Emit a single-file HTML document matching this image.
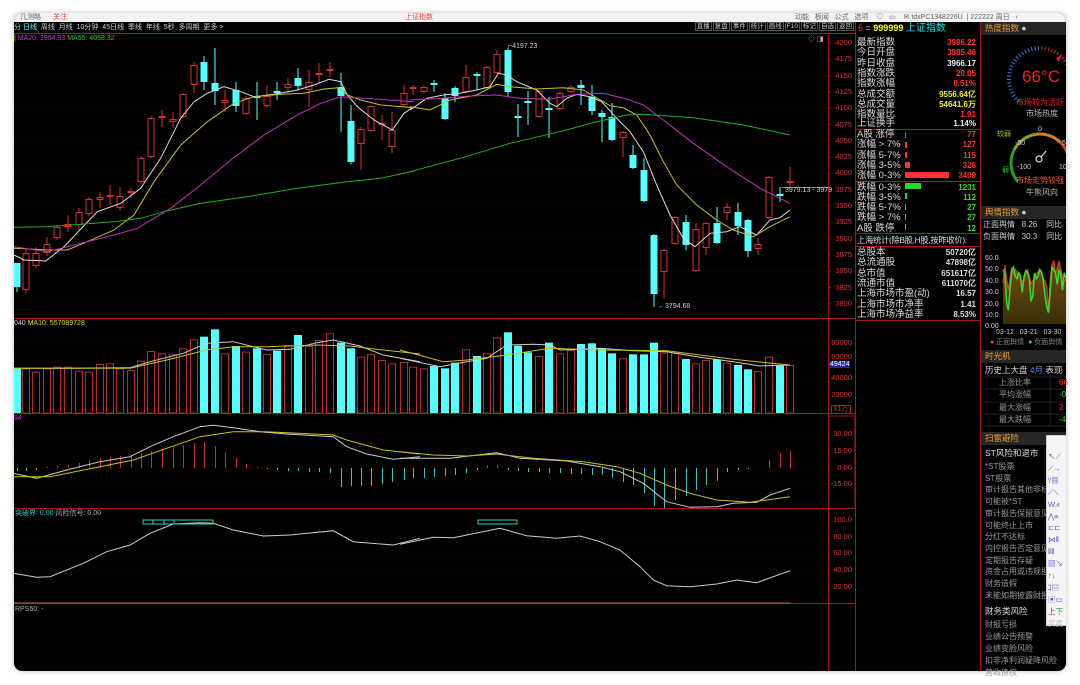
<!DOCTYPE html>
<html><head><meta charset="utf-8">
<style>
*{margin:0;padding:0;box-sizing:border-box}
body{width:1080px;height:685px;background:#fff;position:relative;overflow:hidden;font-family:"Liberation Sans","Noto Sans CJK SC",sans-serif}
.win{position:absolute;left:14px;top:13px;width:1052px;height:658px;background:#000;border-radius:8px;overflow:hidden;box-shadow:0 0 6px rgba(0,0,0,.25)}
.t{position:absolute;white-space:nowrap;line-height:1}
.s8{font-size:8px}
.s7{font-size:7px}
.ax{position:absolute;font-size:7.5px;color:#d33;text-align:right;width:26px;line-height:1}
.row{position:absolute;left:857px;width:121px;height:10.3px;font-size:9.5px;line-height:10.3px;color:#ddd;white-space:nowrap}
.row b{position:absolute;right:2px;font-weight:bold;font-size:8px}
.rp{position:absolute;font-size:8px;color:#ccc;white-space:nowrap;line-height:1}
.hdr{position:absolute;left:981px;width:85px;height:13px;background:#262626;color:#f0a030;font-size:8.5px;line-height:13px;padding-left:4px}
.bt{border:1px solid #555;padding:0 1px;margin-left:1px}
</style></head><body>
<div class="win"></div>
<svg id="sv" width="1080" height="685" style="position:absolute;left:0;top:0">
<defs><clipPath id="cp"><rect x="14" y="13" width="1052" height="658" rx="8"/></clipPath>
<linearGradient id="gf" x1="0" y1="0" x2="0" y2="1"><stop offset="0" stop-color="#7a4a10"/><stop offset="1" stop-color="#3a3008"/></linearGradient></defs>
<g id="g" clip-path="url(#cp)"></g>
</svg>

<div class="t s8" style="left:14px;top:13px;width:1052px;height:9px;background:#f2f2f2;border-radius:8px 8px 0 0"></div>
<div class="t s7" style="left:20px;top:14px;color:#666">几测略 <span style="color:#e44;margin-left:10px">关注</span></div>
<div class="t s7" style="left:405px;top:14px;color:#e44">上证指数</div>
<div class="t s7" style="left:795px;top:14px;color:#666">动能 &nbsp;&nbsp;板闻 &nbsp;&nbsp;公式 &nbsp;&nbsp;选项 &nbsp;&nbsp;&nbsp;♡ &nbsp;&nbsp;▭ &nbsp;&nbsp;&nbsp;✉ tdxPC1348226U &nbsp;| 222222 周日 &nbsp;&nbsp;‹</div>

<div class="t s7" style="left:14px;top:24px;color:#ccc">分 <span style="color:#6ff">日线</span> &nbsp;周线 &nbsp;月线 &nbsp;10分钟 &nbsp;45日线 &nbsp;季线 &nbsp;年线 &nbsp;5秒 &nbsp;多周期 &nbsp;更多 &gt;</div>
<div class="t" style="right:226px;top:24px;color:#ccc;font-size:6.5px"><span class="bt">直播</span><span class="bt">复盘</span><span class="bt">事件</span><span class="bt">统计</span><span class="bt">画线</span><span class="bt">F10</span><span class="bt">标记</span><span class="bt">自选</span><span class="bt">返回</span></div>
<div class="t" style="left:858px;top:24px;font-size:9px;color:#e33">6 <span style="color:#ccc">=</span> <b style="color:#ff0">999999</b> <span style="color:#2dd;font-size:10px">上证指数</span></div>

<div class="t s7" style="left:14px;top:35px;color:#c3c"><span style="color:#dd0">|</span> MA20: 3954.33 <span style="color:#2c2">MA55: 4058.32</span></div>
<div class="t s7" style="left:508px;top:43px;color:#ccc">⌐4197.23</div>
<div class="t s7" style="left:658px;top:303px;color:#ccc">←3794.68</div>
<div class="t s7" style="left:785px;top:187px;color:#ccc">3979.13 - 3979</div>
<div class="t s7" style="left:808px;top:36px;color:#aaa">◇ ◨</div>
<div class="t s7" style="left:14px;top:320px;color:#ccc">040 <span style="color:#dd0">MA10: 557089728</span></div>
<div class="t s7" style="left:14px;top:415px;color:#c3c">94</div>
<div class="t s7" style="left:15px;top:510px;color:#2cc">突破界: 0.00 <span style="color:#aaa">风险信号: 0.00</span></div>
<div class="t s7" style="left:15px;top:606px;color:#aaa">RPS50: -</div>

<div id="pax"></div>
<div class="ax" style="left:826px;top:339px">80000</div>
<div class="ax" style="left:826px;top:353px">60000</div>
<div class="t s7" style="left:829px;top:361px;background:#2222aa;color:#fff;padding:0 1px">49424</div>
<div class="ax" style="left:826px;top:374px">40000</div>
<div class="ax" style="left:826px;top:391px">20000</div>
<div class="t s7" style="left:831px;top:405px;color:#d33;border:1px solid #a22;padding:0 1px">X1万</div>
<div class="ax" style="left:826px;top:430px">30.00</div>
<div class="ax" style="left:826px;top:447px">15.00</div>
<div class="ax" style="left:826px;top:464px">0.00</div>
<div class="ax" style="left:826px;top:480px">-15.00</div>
<div class="ax" style="left:826px;top:516px">100.0</div>
<div class="ax" style="left:826px;top:533px">80.00</div>
<div class="ax" style="left:826px;top:549px">60.00</div>
<div class="ax" style="left:826px;top:566px">40.00</div>
<div class="ax" style="left:826px;top:583px">20.00</div>

<div class="row" style="top:38px">最新指数<b style="color:#f33">3986.22</b></div>
<div class="row" style="top:48.3px">今日开盘<b style="color:#f33">3985.46</b></div>
<div class="row" style="top:58.6px">昨日收盘<b style="color:#eee">3966.17</b></div>
<div class="row" style="top:68.9px">指数涨跌<b style="color:#f33">20.05</b></div>
<div class="row" style="top:79.2px">指数涨幅<b style="color:#f33">0.51%</b></div>
<div class="row" style="top:89.5px">总成交额<b style="color:#ee2">9556.64亿</b></div>
<div class="row" style="top:99.8px">总成交量<b style="color:#ee2">54641.6万</b></div>
<div class="row" style="top:110.1px">指数量比<b style="color:#f33">1.01</b></div>
<div class="row" style="top:119.4px">上证换手<b style="color:#eee">1.14%</b></div>
<div class="row" style="top:130px">A股 涨停<b style="color:#f33">77</b></div>
<div class="row" style="top:140.3px">涨幅 &gt; 7%<b style="color:#f33">127</b></div>
<div class="row" style="top:150.6px">涨幅 5-7%<b style="color:#f33">115</b></div>
<div class="row" style="top:160.9px">涨幅 3-5%<b style="color:#f33">326</b></div>
<div class="row" style="top:171.2px">涨幅 0-3%<b style="color:#f33">3409</b></div>
<div class="row" style="top:182.5px">跌幅 0-3%<b style="color:#3d3">1231</b></div>
<div class="row" style="top:192.8px">跌幅 3-5%<b style="color:#3d3">112</b></div>
<div class="row" style="top:203.1px">跌幅 5-7%<b style="color:#3d3">27</b></div>
<div class="row" style="top:213.4px">跌幅 &gt; 7%<b style="color:#3d3">27</b></div>
<div class="row" style="top:223.7px">A股 跌停<b style="color:#3d3">12</b></div>
<div class="row" style="top:234.5px;font-size:8.3px;letter-spacing:-0.3px">上海统计(除B股,H股,按昨收价):</div>
<div class="row" style="top:248px">总股本<b style="color:#ddd">50720亿</b></div>
<div class="row" style="top:258.3px">总流通股<b style="color:#ddd">47898亿</b></div>
<div class="row" style="top:268.6px">总市值<b style="color:#ddd">651617亿</b></div>
<div class="row" style="top:278.9px">流通市值<b style="color:#ddd">611070亿</b></div>
<div class="row" style="top:289.2px">上海市场市盈(动)<b style="color:#ddd">16.57</b></div>
<div class="row" style="top:299.5px">上海市场市净率<b style="color:#ddd">1.41</b></div>
<div class="row" style="top:309.8px">上海市场净益率<b style="color:#ddd">8.53%</b></div>

<div class="hdr" style="top:22px">热度指数 <span style="color:#ccc">●</span></div>
<div class="t" style="left:1022px;top:68px;font-size:17px;color:#e22">66°C</div>
<div class="rp" style="left:1016px;top:99px;color:#e22">市场较为活跃</div>
<div class="rp" style="left:1026px;top:110px;color:#bbb">市场热度</div>
<div class="rp" style="left:997px;top:131px;color:#bb2;font-size:7px">较弱</div>
<div class="rp" style="left:1038px;top:126px;font-size:7px">0</div>
<div class="rp" style="left:1015px;top:140px;font-size:7px">-50</div>
<div class="rp" style="left:1062px;top:140px;font-size:7px">50</div>
<div class="rp" style="left:1017px;top:164px;font-size:7px">-100</div>
<div class="rp" style="left:1059px;top:164px;font-size:7px">100</div>
<div class="rp" style="left:1002px;top:167px;color:#3c3;font-size:7px">弱</div>
<div class="rp" style="left:1016px;top:177px;color:#e53">市场走势较强</div>
<div class="rp" style="left:1026px;top:189px;color:#bbb">牛熊风向</div>
<div class="hdr" style="top:206px">舆情指数 <span style="color:#ccc">●</span></div>
<div class="rp" style="left:983px;top:221px">正面舆情 &nbsp;&nbsp;8.26 &nbsp;&nbsp;&nbsp;同比</div>
<div class="rp" style="left:983px;top:233px">负面舆情 &nbsp;&nbsp;30.3 &nbsp;&nbsp;&nbsp;同比</div>
<div class="rp" style="left:985px;top:253px;font-size:7px;line-height:11.4px">60.0<br>50.0<br>40.0<br>30.0<br>20.0<br>10.0<br>0.00</div>
<div class="rp" style="left:996px;top:329px;font-size:7px">03-12 &nbsp;&nbsp;03-21 &nbsp;&nbsp;03-30</div>
<div class="rp" style="left:990px;top:339px;font-size:7px;color:#888"><span style="color:#e52">●</span> 正面舆情 &nbsp;<span style="color:#3d3">●</span> 负面舆情</div>
<div class="hdr" style="top:350px">时光机</div>
<div class="rp" style="left:985px;top:366px;font-size:8.5px;color:#ddd">历史上大盘 <span style="color:#49f">4月</span> 表现</div>
<div class="rp" style="left:999px;top:379px;color:#999">上涨比率</div><div class="rp" style="left:1059px;top:379px;color:#e33">66</div>
<div class="rp" style="left:999px;top:391px;color:#999">平均涨幅</div><div class="rp" style="left:1059px;top:391px;color:#3c3">-0</div>
<div class="rp" style="left:999px;top:404px;color:#999">最大涨幅</div><div class="rp" style="left:1059px;top:404px;color:#e33">2</div>
<div class="rp" style="left:999px;top:416px;color:#999">最大跌幅</div><div class="rp" style="left:1059px;top:416px;color:#3c3">-4</div>
<div class="hdr" style="top:432px">扫雷避险</div>
<div class="rp" style="left:985px;top:449px;font-size:8.5px;color:#ddd">ST风险和退市</div>
<div class="rp" style="left:985px;top:461px;color:#999;line-height:11.7px">*ST股票<br>ST股票<br>审计报告其他非标<br>可能被*ST<br>审计报告保留意见<br>可能终止上市<br>分红不达标<br>内控报告否定意见<br>定期报告存疑<br>资金占用或违规担保<br>财务造假<br>未能如期披露财报</div>
<div class="rp" style="left:985px;top:607px;font-size:8.5px;color:#ddd">财务类风险</div>
<div class="rp" style="left:985px;top:619px;color:#999;line-height:11.9px">财报亏损<br>业绩公告预警<br>业绩变脸风险<br>扣非净利润疑降风险<br>营收债权</div>
<div style="position:absolute;left:1046px;top:435px;width:20px;height:191px;background:#f4f4f4;border:1px solid #ccc;border-right:0"></div>
<div class="rp" style="left:1048px;top:451px;color:#55c;font-size:7.5px;line-height:11.9px">↖⟋<br>⟋→<br>⫯▦<br>⟋⟍<br>W⩘<br>⋀≡<br>⊏⊏<br>⋈⦀<br>⦀⦀<br>▨↘<br><span style="color:#d22">↑</span><span style="color:#2a2">↓</span><br>ℷ▤<br>▣▭<br><span style="color:#d22">上</span><span style="color:#2a2">下</span><br><span style="color:#bbb">买卖</span></div>

<script>
var g=document.getElementById('g'),NS='http://www.w3.org/2000/svg';
function el(t,a){var e=document.createElementNS(NS,t);for(var k in a)e.setAttribute(k,a[k]);g.appendChild(e);return e;}
function line(x1,y1,x2,y2,c,w,d){var o={x1:x1,y1:y1,x2:x2,y2:y2,stroke:c,'stroke-width':w||1};if(d)o['stroke-dasharray']=d;el('line',o);}
function pl(a,ox,oy,c,w){var s=[];for(var i=0;i<a.length;i+=2)s.push((a[i]/3+ox).toFixed(1)+','+(a[i+1]/3+oy).toFixed(1));el('polyline',{points:s.join(' '),fill:'none',stroke:c,'stroke-width':w||1});}
var RED='#a01818';
var pax='';
for(var i=0;i<=16;i++){var p=4200-25*i,y=43+i*16.3;pax+='<div class="ax" style="left:826px;top:'+(y-4)+'px">'+p+'</div>';if(i%2==0)line(14,y,828,y,'#3a0a0a',1,'1 3');line(828,y,831,y,RED,1);}
document.getElementById('pax').innerHTML=pax;
[343,357,378,395].forEach(function(y){line(14,y,828,y,'#3a0a0a',1,'1 3');});
[434,451,468,484].forEach(function(y){line(14,y,828,y,'#3a0a0a',1,'1 3');});
[520,537,553,570,587].forEach(function(y){line(14,y,828,y,'#3a0a0a',1,'1 3');});
line(14,33.5,855,33.5,RED,1);
line(14,318.5,855,318.5,RED,1);line(14,413.5,855,413.5,RED,1);line(14,508.5,855,508.5,RED,1);line(14,603.5,855,603.5,RED,1);
line(14,603,790,603,'#d05050',1);
line(828.5,33,828.5,671,RED,1);line(855.5,22,855.5,671,RED,1);line(980.5,22,980.5,671,RED,1);
line(856,129.5,980,129.5,RED,1);line(856,181.5,980,181.5,RED,1);line(856,233.5,980,233.5,RED,1);line(856,246.5,980,246.5,RED,1);
line(856,320.5,980,320.5,RED,1);
line(829,416,855,416,RED,1);line(855,416,855,508,RED,1);
line(782,187.5,828,187.5,'#888',1);
// info bars
[[905,135,1,'#f33'],[905,145,2,'#f33'],[905,155,2,'#f33'],[905,165,5,'#f33'],[905,175,44,'#f33'],[905,186,16,'#2d2'],[905,196,2,'#2d2'],[905,207,1,'#2d2'],[905,217,1,'#2d2'],[905,227,1,'#2d2']].forEach(function(b){el('rect',{x:b[0],y:b[1]-3,width:b[2],height:6,fill:b[3]});});
var C=[[17,263,287,263,292,'c'],[26,253,290,250,293,'r'],[36,253,266,247,268,'r'],[47,244,253,237,256,'r'],[57,227,238,225,240,'r'],[68,224,227,215,232,'r'],[79,212,225,208,230,'r'],[89,199,214,197,216,'r'],[100,197,200,192,208,'r'],[110,195,197,185,205,'r'],[120,196,208,187,210,'r'],[131,191,193,188,198,'r'],[141,158,182,156,184,'r'],[151,118,157,116,158,'r'],[162,116,118,110,127,'r'],[173,119,122,112,128,'r'],[183,94,117,93,118,'r'],[194,65,85,62,93,'r'],[204,62,82,56,90,'c'],[215,83,91,48,105,'c'],[225,100,103,90,112,'r'],[236,90,106,82,112,'c'],[246,98,114,96,115,'r'],[257,96,98,82,120,'c'],[267,96,106,85,108,'r'],[277,91,93,82,100,'c'],[288,84,88,78,93,'r'],[298,78,86,68,90,'c'],[309,82,90,70,107,'r'],[319,73,75,63,83,'r'],[330,69,71,62,77,'r'],[341,87,96,73,132,'c'],[351,121,162,105,164,'c'],[361,129,144,127,170,'r'],[371,106,131,105,132,'r'],[382,123,125,115,140,'r'],[392,130,147,112,153,'r'],[404,93,105,85,107,'r'],[413,87,89,85,95,'r'],[424,87,92,85,93,'r'],[434,83,85,80,92,'c'],[445,98,119,93,120,'c'],[455,88,96,86,102,'c'],[466,77,92,65,93,'r'],[477,74,76,72,90,'c'],[487,67,88,66,89,'r'],[497,54,73,50,74,'r'],[508,50,92,48,97,'c'],[518,116,118,104,137,'c'],[528,101,103,91,125,'c'],[539,91,117,90,118,'r'],[549,108,110,97,138,'c'],[560,93,109,92,110,'r'],[571,87,92,85,93,'r'],[581,85,88,80,105,'c'],[592,97,111,85,115,'c'],[602,113,117,110,142,'c'],[612,117,140,103,141,'c'],[623,132,138,131,157,'r'],[633,155,168,145,169,'c'],[644,170,201,158,202,'c'],[654,235,294,234,307,'c'],[664,250,272,249,298,'r'],[675,217,244,216,245,'r'],[686,222,245,215,250,'c'],[696,229,271,223,272,'r'],[706,223,248,222,255,'r'],[717,223,243,207,244,'c'],[727,207,213,203,220,'r'],[738,212,226,203,235,'c'],[748,220,251,219,257,'c'],[758,244,249,238,255,'r'],[769,177,218,176,219,'r'],[780,194,196,187,202,'c'],[790,181,183,167,187,'r']];
var V=[205,205,215,205,200,200,212,215,192,190,205,210,182,153,160,163,145,118,110,88,160,138,155,145,162,152,135,105,138,120,100,128,145,170,162,180,190,186,200,205,198,205,188,148,168,160,112,97,137,157,168,128,160,150,132,130,145,160,175,163,163,128,158,158,177,190,180,178,188,195,208,213,170,197,195];
var M=[-3,-3,-2,1,2,3,5,8,10,11,12,13,15,17,19,21,23,25,26,22,16,10,4,1,-1,-2,-3,-3,-4,-4,-5,-19,-18,-18,-18,-16,-14,-12,-10,-10,-9,-8,-7,-5,-2,3,3,-2,-3,-4,-4,-5,-5,-6,-6,-7,-7,-10,-14,-17,-25,-38,-40,-32,-28,-22,-17,-13,-4,-2,-1,0,8,15,17];
var CY='#55ffff',RC='#d83030';
C.forEach(function(c,i){
 var x=c[0],col=c[5]=='c'?CY:RC;
 line(x,c[3],x,c[4],col,1);
 var h=Math.max(c[2]-c[1],1);
 if(c[5]=='c')el('rect',{x:x-3.5,y:c[1],width:7,height:h,fill:CY});
 else el('rect',{x:x-3,y:c[1]+.5,width:6,height:Math.max(h-1,0.5),fill:'#000',stroke:RC,'stroke-width':1});
 var vt=300+V[i]/3;
 if(c[5]=='c')el('rect',{x:x-4,y:vt,width:8,height:413-vt,fill:CY});
 else el('rect',{x:x-3.5,y:vt+.5,width:7,height:412.5-vt,fill:'none',stroke:'#b03030','stroke-width':1});
 var m=M[i];line(x+.5,468,x+.5,468-m,m>=0?'#c03030':'#40c0c0',1);
});
pl([0,660,30,675,95,678,150,635,250,530,320,505,380,460,440,370,500,250,540,200,580,175,630,155,680,170,720,185,780,178,850,165,900,150,945,133,980,140,1000,180,1030,215,1080,255,1135,285,1170,235,1200,215],14,35,'#ddd');
pl([0,225,50,190,100,180,150,175,200,165,240,155,265,115,290,120,320,140,380,165,420,205,440,215,470,190,500,178,540,185,575,200,620,250,660,290,700,350,740,450,780,540,820,610,855,635,900,595,950,590,990,575,1040,600,1080,555,1110,548,1140,525],410,35,'#ddd');
pl([0,640,100,645,160,645,220,620,300,585,360,540,420,440,500,330,580,260,660,205,720,185,800,178,870,175,930,162,975,158,1000,180,1040,195,1100,210,1200,218],14,35,'#c8c020');
pl([0,215,60,225,120,195,200,180,260,148,300,155,380,162,460,158,520,165,600,212,640,218,680,240,720,300,760,380,800,450,860,510,920,555,970,585,1030,605,1080,575,1140,545],410,35,'#c8c020');
pl([0,635,100,650,200,625,300,600,370,580,470,520,560,450,650,375,750,300,850,240,920,205,980,185,1050,190,1200,200],14,35,'#c030c0');
pl([0,195,100,190,180,183,260,180,330,190,420,193,500,178,580,175,650,192,700,210,760,255,850,325,950,395,1050,460,1140,505],410,35,'#c030c0');
pl([0,577,100,575,200,568,300,560,380,550,450,530,560,505,700,485,850,460,1000,440,1100,430,1200,408],14,35,'#20b020');
pl([0,410,150,370,300,325,450,290,560,260,650,240,700,238,850,248,1000,270,1140,300],410,35,'#20b020');
pl([40,205,200,205,390,203,450,185,550,160,620,130,700,125,800,150,870,148,950,128,1000,120,1080,138,1150,165,1260,185],0,300,'#ccc');
pl([0,175,120,200,200,185,260,175,320,135,400,133,450,135,480,150,550,148,600,145,700,152,800,155,900,172,1000,185,1080,198,1170,195],400,300,'#ccc');
pl([40,205,390,205,500,180,620,150,700,140,800,140,950,135,1050,138,1150,150,1260,162],0,300,'#c8c020');
pl([0,150,130,185,200,180,320,165,450,145,600,150,800,152,900,165,1000,178,1100,188,1170,195],400,300,'#c8c020');
pl([40,520,110,535,200,510,300,485,390,470,450,440,520,410,600,380,640,376,700,383,780,395,860,402,1000,410,1040,440,1100,462,1180,478,1260,470],0,300,'#ccc');
pl([0,475,150,475,290,458,360,475,500,483,600,500,660,515,730,550,800,605,870,622,950,620,1000,610,1070,607,1110,585,1170,565],400,300,'#ccc');
pl([40,530,150,530,300,500,400,480,500,445,600,410,700,395,800,395,1000,405,1040,420,1150,450,1260,462],0,300,'#c8c020');
pl([0,455,100,465,200,468,290,462,400,475,550,485,650,500,720,520,800,555,870,580,950,600,1050,607,1100,600,1170,590],400,300,'#c8c020');
pl([40,820,110,832,150,830,250,790,320,755,390,735,450,700,520,672,600,668,640,670,700,690,790,708,870,705,1000,692,1060,725,1180,735,1260,715],0,300,'#ccc');
pl([0,733,100,712,160,713,300,685,380,707,470,715,540,708,600,725,660,750,720,800,760,840,800,857,870,860,950,852,1010,840,1070,848,1170,812],400,300,'#ccc');
el('rect',{x:143,y:520,width:70,height:4,fill:'none',stroke:'#3cc','stroke-width':1});
[153,164,174].forEach(function(x){line(x,520,x,524,'#3cc',1);});
el('rect',{x:478,y:520,width:39,height:4,fill:'none',stroke:'#3cc','stroke-width':1});
for(var a=0;a<=40;a++){var ang=Math.PI*(1.25-a*0.035),r1=29,r2=33,cx=1040,cy=79;
 line(cx+r1*Math.cos(ang),cy-r1*Math.sin(ang),cx+r2*Math.cos(ang),cy-r2*Math.sin(ang),a<22?'#4a6ee0':'#d02828',1);}
el('polygon',{points:'1056,58 1061,56 1059,62',fill:'#e22'});
var cx2=1040,cy2=163,r=29;
function arc(a1,a2,c){var p1=[cx2+r*Math.cos(a1),cy2-r*Math.sin(a1)],p2=[cx2+r*Math.cos(a2),cy2-r*Math.sin(a2)];el('path',{d:'M'+p1[0]+','+p1[1]+' A'+r+','+r+' 0 0 1 '+p2[0]+','+p2[1],fill:'none',stroke:c,'stroke-width':3});}
arc(Math.PI*1.22,Math.PI*0.85,'#20a020');arc(Math.PI*0.85,Math.PI*0.55,'#90a020');arc(Math.PI*0.55,Math.PI*0.25,'#d08020');arc(Math.PI*0.25,Math.PI*0.05,'#d04020');
el('circle',{cx:1039,cy:159,r:3,fill:'none',stroke:'#ddd','stroke-width':1.2});line(1041,157,1046,151,'#ddd',1.2);
var gx=1003,gw=63,gy0=324,sc=68/60;
function yy(v){return gy0-v*sc;}
var G=[48,45,20,12,30,47,50,42,40,45,42,28,42,47,45,40,20,25,45,40,42,48,46,38,25,15,10,30,50,48,45,35,48,44,30,45,40];
var R=[36,52,40,30,40,50,44,48,46,42,40,38,38,46,48,42,35,38,42,44,46,48,44,40,38,33,12,40,52,56,44,50,55,48,42,38,40];
var n=G.length,dx=gw/(n-1),sg='',sr='';
for(var i=0;i<n;i++){sg+=(gx+i*dx).toFixed(1)+','+yy(G[i]).toFixed(1)+' ';sr+=(gx+i*dx).toFixed(1)+','+yy(R[i]).toFixed(1)+' ';}
el('polygon',{points:gx+','+gy0+' '+sr+(gx+gw)+','+gy0,fill:'url(#gf)'});
el('polyline',{points:sr,fill:'none',stroke:'#d84020','stroke-width':1.2});
el('polyline',{points:sg,fill:'none',stroke:'#30e030','stroke-width':1.5});
[377,389,402,414,426].forEach(function(y){line(983,y,1066,y,'#222',1);});
line(1050,377,1050,426,'#222',1);
</script>
</body></html>
